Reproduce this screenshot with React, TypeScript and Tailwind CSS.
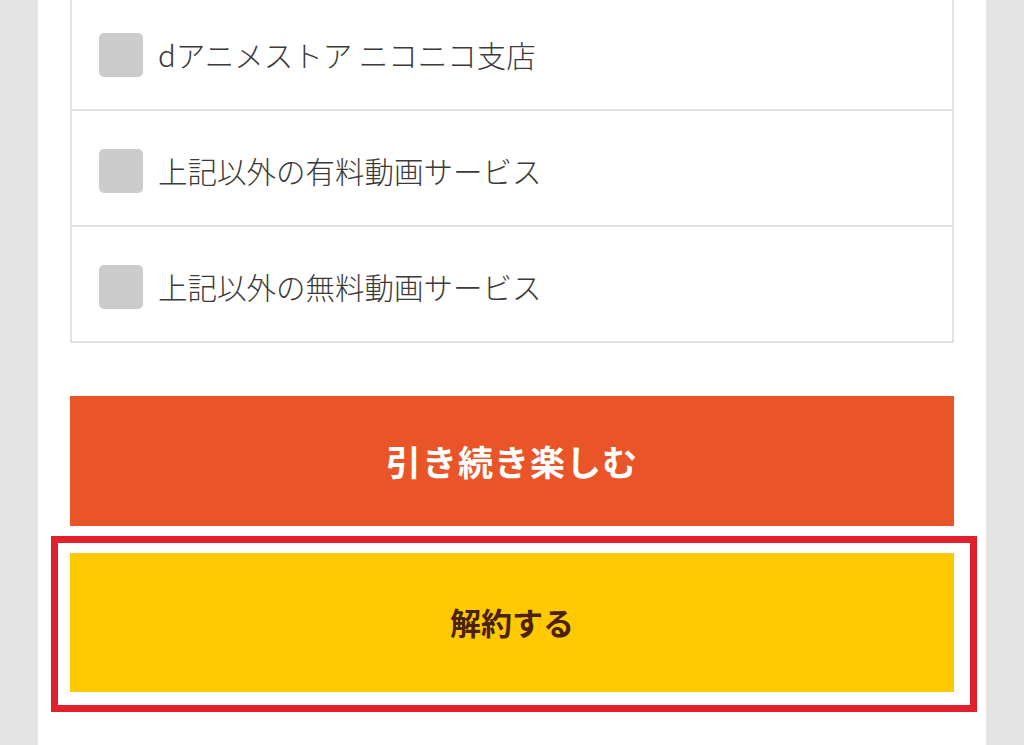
import React from "react";

const items = [
  "dアニメストア ニコニコ支店",
  "上記以外の有料動画サービス",
  "上記以外の無料動画サービス",
];

export default function App() {
  return (
    <div
      className="w-[1024px] h-[745px] overflow-hidden bg-[#e3e3e3] flex justify-center"
      style={{ fontFamily: '"Noto Sans CJK JP", "Noto Sans", sans-serif' }}
    >
      <div className="relative w-[948px] h-full bg-white px-[32px] flex flex-col">
        <div className="-mt-[7px] border-2 border-[#e2e2e2] flex flex-col">
          {items.map((t, i) => (
            <div
              key={t}
              className={
                i < items.length - 1
                  ? "h-[116px] border-b-2 border-[#e2e2e2] flex items-center pl-[27px] pt-[6px]"
                  : "h-[114px] flex items-center pl-[27px] pt-[6px]"
              }
            >
              <div className="w-[44px] h-[44px] rounded-[5px] bg-[#cccccc] shrink-0" />
              <span className="ml-[15px] text-[29.5px] leading-none font-light text-[#3a3a3a]">{t}</span>
            </div>
          ))}
        </div>
        <button className="mt-[53px] h-[130px] w-full bg-[#e95428] text-white text-[35px] font-semibold tracking-[1px] flex items-center justify-center">
          引き続き楽しむ
        </button>
        <button className="mt-[27px] h-[139px] w-full bg-[#fec900] text-[#4b2209] text-[31px] font-bold flex items-center justify-center">
          解約する
        </button>
        <div className="absolute left-[13px] top-[536px] w-[926px] h-[176px] border-[7px] border-[#e2202c] pointer-events-none" />
      </div>
    </div>
  );
}
